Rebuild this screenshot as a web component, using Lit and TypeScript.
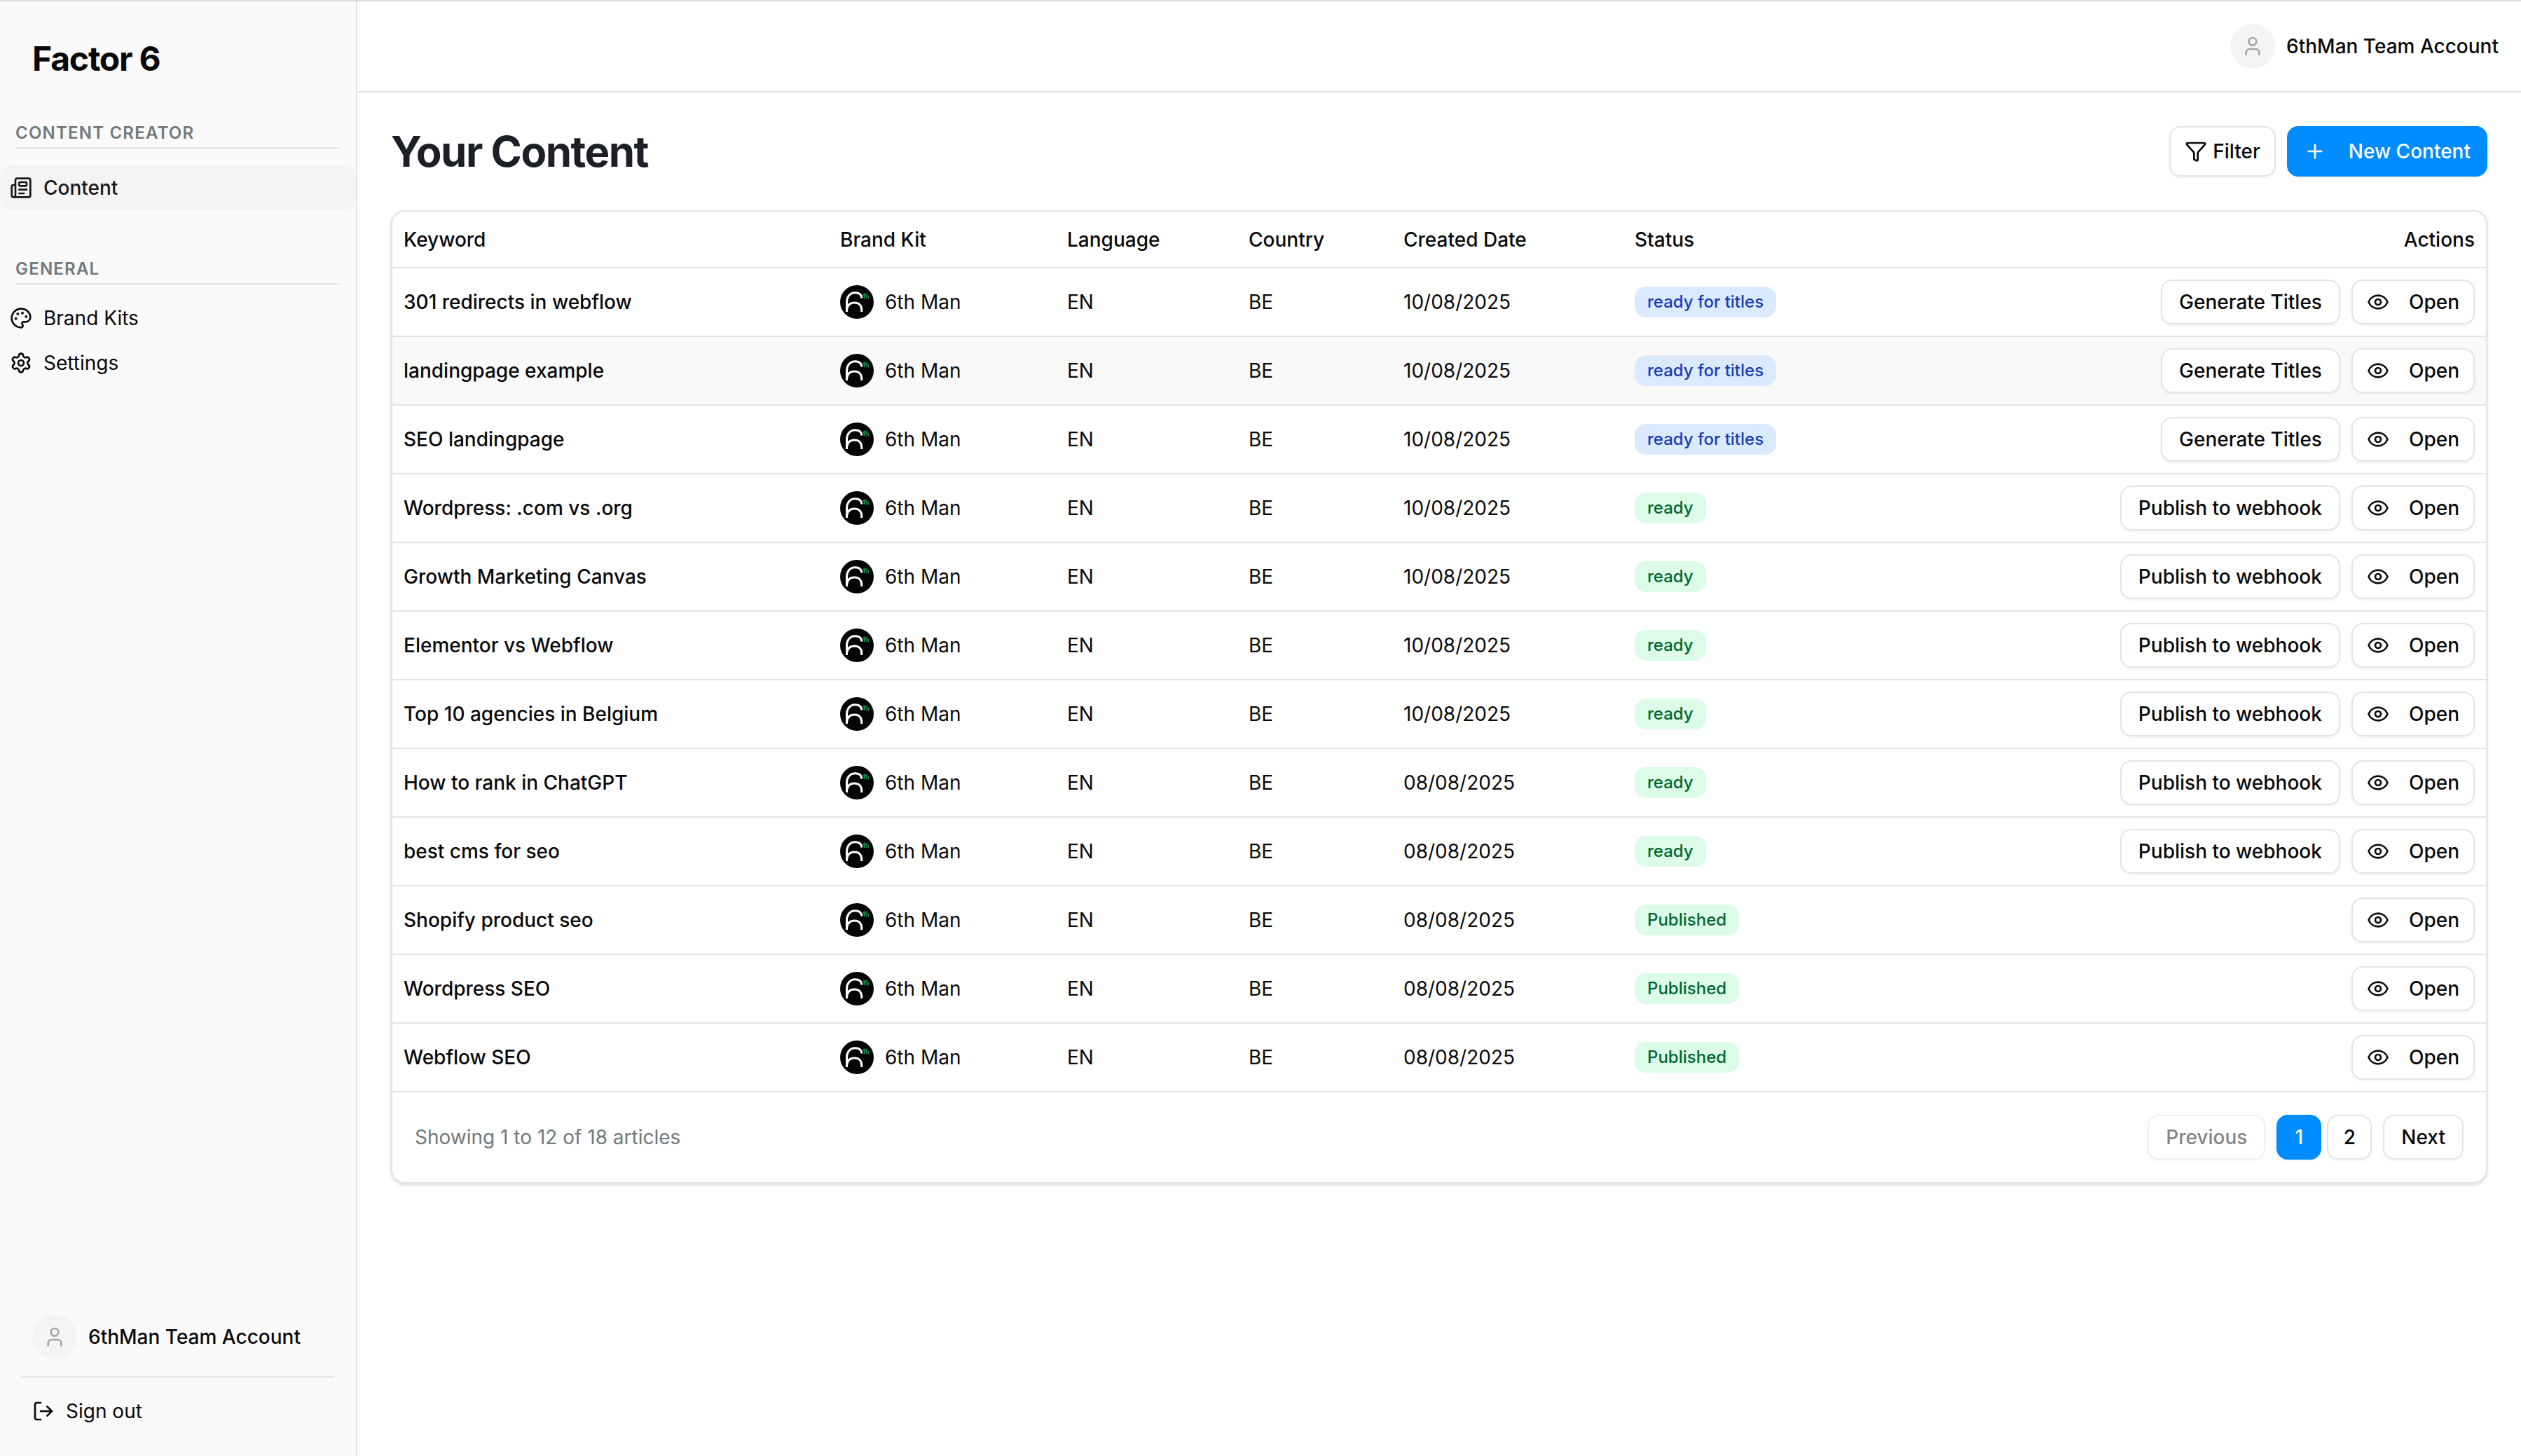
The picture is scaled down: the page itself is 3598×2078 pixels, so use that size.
import { LitElement, html, css, svg, nothing } from "lit";
import { customElement, property, state } from "lit/decorators.js";

const ICONS = {
  newspaper: svg`<path d="M15 18h-5"/><path d="M18 14h-8"/><path d="M4 22h16a2 2 0 0 0 2-2V4a2 2 0 0 0-2-2H8a2 2 0 0 0-2 2v16a2 2 0 0 1-4 0v-9a2 2 0 0 1 2-2h2"/><rect width="8" height="4" x="10" y="6" rx="1"/>`,
  palette: svg`<path d="M12 22a1 1 0 0 1 0-20 10 9 0 0 1 10 9 5 5 0 0 1-5 5h-2.25a1.75 1.75 0 0 0-1.4 2.8l.3.4a1.75 1.75 0 0 1-1.4 2.8z"/><circle cx="13.5" cy="6.5" r=".5" fill="currentColor"/><circle cx="17.5" cy="10.5" r=".5" fill="currentColor"/><circle cx="6.5" cy="12.5" r=".5" fill="currentColor"/><circle cx="8.5" cy="7.5" r=".5" fill="currentColor"/>`,
  settings: svg`<path d="M9.671 4.136a2.34 2.34 0 0 1 4.659 0 2.34 2.34 0 0 0 3.319 1.915 2.34 2.34 0 0 1 2.33 4.033 2.34 2.34 0 0 0 0 3.831 2.34 2.34 0 0 1-2.33 4.033 2.34 2.34 0 0 0-3.319 1.915 2.34 2.34 0 0 1-4.659 0 2.34 2.34 0 0 0-3.32-1.915 2.34 2.34 0 0 1-2.33-4.033 2.34 2.34 0 0 0 0-3.831A2.34 2.34 0 0 1 6.35 6.051a2.34 2.34 0 0 0 3.319-1.915"/><circle cx="12" cy="12" r="3"/>`,
  user: svg`<path d="M19 21v-2a4 4 0 0 0-4-4H9a4 4 0 0 0-4 4v2"/><circle cx="12" cy="7" r="4"/>`,
  logout: svg`<path d="m16 17 5-5-5-5"/><path d="M21 12H9"/><path d="M9 21H5a2 2 0 0 1-2-2V5a2 2 0 0 1 2-2h4"/>`,
  funnel: svg`<path d="M10 20a1 1 0 0 0 .553.895l2 1A1 1 0 0 0 14 21v-7a2 2 0 0 1 .517-1.341L21.74 4.67A1 1 0 0 0 21 3H3a1 1 0 0 0-.742 1.67l7.225 7.989A2 2 0 0 1 10 14z"/>`,
  plus: svg`<path d="M5 12h14"/><path d="M12 5v14"/>`,
  eye: svg`<path d="M2.062 12.348a1 1 0 0 1 0-.696 10.75 10.75 0 0 1 19.876 0 1 1 0 0 1 0 .696 10.75 10.75 0 0 1-19.876 0"/><circle cx="12" cy="12" r="3"/>`,
};

type IconName = keyof typeof ICONS;

const icon = (name: IconName) => html`<svg
  class="icon"
  viewBox="0 0 24 24"
  fill="none"
  stroke="currentColor"
  stroke-width="2"
  stroke-linecap="round"
  stroke-linejoin="round"
  aria-hidden="true"
>${ICONS[name]}</svg>`;

const base = css`
  * {
    box-sizing: border-box;
  }
  .icon {
    display: block;
    width: 32px;
    height: 32px;
    flex: none;
  }
  .btn {
    display: inline-flex;
    align-items: center;
    justify-content: center;
    height: 64px;
    padding: 0 24px;
    border: 2px solid #e4e4e4;
    border-radius: 16px;
    background: #fff;
    color: #09090b;
    font: inherit;
    font-weight: 500;
    white-space: nowrap;
    text-decoration: none;
    box-shadow: 0 2px 4px rgb(0 0 0 / 5%);
    cursor: pointer;
  }
  .btn:disabled {
    opacity: 0.5;
    cursor: default;
  }
  .btn.primary {
    border-color: #008cff;
    background: #008cff;
    color: #fff;
  }
`;

interface Article {
  keyword: string;
  date: string;
  status: "ready for titles" | "ready" | "Published";
}

const row = (keyword: string, date: string, status: Article["status"]): Article => ({ keyword, date, status });

const ARTICLES: Article[] = [
  row("301 redirects in webflow", "10/08/2025", "ready for titles"),
  row("landingpage example", "10/08/2025", "ready for titles"),
  row("SEO landingpage", "10/08/2025", "ready for titles"),
  row("Wordpress: .com vs .org", "10/08/2025", "ready"),
  row("Growth Marketing Canvas", "10/08/2025", "ready"),
  row("Elementor vs Webflow", "10/08/2025", "ready"),
  row("Top 10 agencies in Belgium", "10/08/2025", "ready"),
  row("How to rank in ChatGPT", "08/08/2025", "ready"),
  row("best cms for seo", "08/08/2025", "ready"),
  row("Shopify product seo", "08/08/2025", "Published"),
  row("Wordpress SEO", "08/08/2025", "Published"),
  row("Webflow SEO", "08/08/2025", "Published"),
];

const NEXT_STEP: Partial<Record<Article["status"], string>> = {
  "ready for titles": "Generate Titles",
  ready: "Publish to webhook",
};

@customElement("account-chip")
export class AccountChip extends LitElement {
  @property() name = "";

  static styles = [
    base,
    css`
      :host {
        display: flex;
        align-items: center;
        gap: 16px;
        font-weight: 500;
        white-space: nowrap;
      }
      .avatar {
        display: grid;
        place-items: center;
        width: 64px;
        height: 64px;
        border-radius: 50%;
        background: #f4f4f4;
        color: #a3a6a6;
      }
    `,
  ];

  render() {
    return html`<span class="avatar">${icon("user")}</span><span>${this.name}</span>`;
  }
}

@customElement("app-sidebar")
export class AppSidebar extends LitElement {
  static styles = [
    base,
    css`
      :host {
        display: flex;
        flex-direction: column;
        width: 510px;
        flex: none;
        border-right: 2px solid #e4e4e4;
        background: #fafafa;
      }
      .brand {
        margin: 0;
        padding: 50px 46px 0;
        font-size: 48px;
        line-height: 64px;
        font-weight: 700;
        letter-spacing: -0.025em;
      }
      .group {
        display: flex;
        flex-direction: column;
      }
      .group + .group {
        margin-top: 66px;
      }
      .brand + .group {
        margin-top: 56px;
      }
      .label {
        margin: 0 24px 24px 22px;
        padding-bottom: 2px;
        border-bottom: 2px solid #e4e4e4;
        color: #71797a;
        font-size: 24px;
        line-height: 36px;
        font-weight: 600;
        letter-spacing: 0.05em;
        text-transform: uppercase;
      }
      .group.general .label {
        margin-bottom: 16px;
      }
      .item {
        display: flex;
        align-items: center;
        gap: 16px;
        height: 64px;
        padding: 0 14px;
        border-radius: 16px;
        color: inherit;
        text-decoration: none;
      }
      .item.active {
        background: #f4f4f4;
        color: #18181b;
        font-weight: 500;
      }
      .foot {
        display: flex;
        flex-direction: column;
        margin-top: auto;
        padding: 0 32px 32px 30px;
      }
      .who {
        padding: 0 16px 24px;
        border-bottom: 2px solid #e4e4e4;
      }
      .signout {
        display: flex;
        align-items: center;
        gap: 16px;
        height: 64px;
        margin-top: 16px;
        padding: 0 16px;
        border: 0;
        background: none;
        color: inherit;
        font: inherit;
        cursor: pointer;
      }
    `,
  ];

  render() {
    return html`
      <h2 class="brand">Factor 6</h2>
      <nav class="group" aria-labelledby="creator">
        <h3 class="label" id="creator">Content Creator</h3>
        <a class="item active" href="#content" aria-current="page">${icon("newspaper")}Content</a>
      </nav>
      <nav class="group general" aria-labelledby="general">
        <h3 class="label" id="general">General</h3>
        <a class="item" href="#brand-kits">${icon("palette")}Brand Kits</a>
        <a class="item" href="#settings">${icon("settings")}Settings</a>
      </nav>
      <div class="foot">
        <account-chip class="who" name="6thMan Team Account"></account-chip>
        <button class="signout" type="button">${icon("logout")}Sign out</button>
      </div>
    `;
  }
}

@customElement("content-table")
export class ContentTable extends LitElement {
  @state() private page = 1;

  static styles = [
    base,
    css`
      :host {
        display: block;
        border: 2px solid #e4e4e4;
        border-radius: 20px;
        background: #fff;
        box-shadow: 0 2px 6px rgb(0 0 0 / 10%), 0 2px 4px rgb(0 0 0 / 6%);
      }
      table {
        width: 100%;
        border-collapse: collapse;
      }
      tr {
        border-bottom: 2px solid #e4e4e4;
      }
      th {
        height: 80px;
        padding: 0 16px;
        font-weight: 500;
        text-align: left;
        white-space: nowrap;
      }
      .c-keyword {
        width: 623px;
      }
      .c-kit {
        width: 324px;
      }
      .c-language {
        width: 259px;
      }
      .c-country {
        width: 221px;
      }
      .c-date {
        width: 330px;
      }
      td {
        padding: 16px;
        white-space: nowrap;
      }
      .highlight {
        background: #f9f9f9;
      }
      .keyword {
        font-weight: 500;
      }
      .kit,
      .actions {
        display: flex;
        align-items: center;
        gap: 16px;
      }
      .actions,
      .end {
        justify-content: flex-end;
        text-align: right;
      }
      .logo {
        display: block;
        width: 48px;
        height: 48px;
      }
      .badge {
        display: inline-flex;
        align-items: center;
        height: 44px;
        padding: 0 18px;
        border-radius: 16px;
        background: #dcfce7;
        color: #016630;
        font-size: 24px;
        font-weight: 500;
        vertical-align: middle;
      }
      .badge.titles {
        background: #dbeafe;
        color: #193cb8;
      }
      .open {
        gap: 28px;
        padding: 0 20px;
      }
      .footer {
        display: flex;
        align-items: center;
        justify-content: space-between;
        padding: 32px;
        color: #71797a;
      }
      .pager,
      .pages {
        display: flex;
        gap: 16px;
      }
      .pages {
        gap: 8px;
      }
      .page {
        width: 64px;
        padding: 0;
      }
    `,
  ];

  private logo() {
    return html`<svg class="logo" viewBox="0 0 48 48" aria-hidden="true">
      <circle cx="24" cy="24" r="24" fill="#050507" />
      <g fill="none" stroke="#fff" stroke-width="3">
        <path d="M9.5 38V25C9.5 16 14.5 10.800 21.500 10.800C27.500 10.800 30.500 14 31 18.500" />
        <path d="M9.500 35C10.500 28 14.500 25 20.500 25C27 25 30.700 29 30.700 35V38" />
      </g>
      <g fill="none" stroke="#12803f">
        <path d="M34.800 11.500V19M32.500 14H37" stroke-width="2.500" />
        <path d="M38 11.500V19.500M38 15.500H40.500V19.500" stroke-width="1.500" />
      </g>
    </svg>`;
  }

  private renderRow(a: Article, i: number) {
    const step = NEXT_STEP[a.status];
    return html`<tr class=${i === 1 ? "highlight" : ""}>
      <td class="keyword">${a.keyword}</td>
      <td><div class="kit">${this.logo()}<span>6th Man</span></div></td>
      <td>EN</td>
      <td>BE</td>
      <td>${a.date}</td>
      <td><span class="badge ${a.status === "ready for titles" ? "titles" : ""}">${a.status}</span></td>
      <td>
        <div class="actions">
          ${step ? html`<button class="btn" type="button">${step}</button>` : nothing}
          <a class="btn open" href="#open">${icon("eye")}Open</a>
        </div>
      </td>
    </tr>`;
  }

  private renderPage(n: number) {
    return html`<button
      class="btn page ${n === this.page ? "primary" : ""}"
      type="button"
      @click=${() => (this.page = n)}
    >${n}</button>`;
  }

  render() {
    return html`
      <table>
        <thead>
          <tr>
            <th class="c-keyword">Keyword</th>
            <th class="c-kit">Brand Kit</th>
            <th class="c-language">Language</th>
            <th class="c-country">Country</th>
            <th class="c-date">Created Date</th>
            <th>Status</th>
            <th class="end">Actions</th>
          </tr>
        </thead>
        <tbody>${ARTICLES.map((a, i) => this.renderRow(a, i))}</tbody>
      </table>
      <div class="footer">
        <span>Showing 1 to 12 of 18 articles</span>
        <div class="pager">
          <button class="btn" type="button" ?disabled=${this.page === 1} @click=${() => (this.page = 1)}>Previous</button>
          <div class="pages">${[1, 2].map((n) => this.renderPage(n))}</div>
          <button class="btn" type="button" ?disabled=${this.page === 2} @click=${() => (this.page = 2)}>Next</button>
        </div>
      </div>
    `;
  }
}

@customElement("app-root")
export class AppRoot extends LitElement {
  static styles = [
    base,
    css`
      :host {
        display: flex;
        min-height: 100vh;
        box-sizing: border-box;
        border-top: 2px solid #dadddc;
        background: #fff;
        color: #09090b;
        font-family: Inter, "Liberation Sans", sans-serif;
        font-size: 28px;
        line-height: 40px;
      }
      .main {
        flex: 1;
        min-width: 0;
      }
      .topbar {
        display: flex;
        align-items: center;
        justify-content: flex-end;
        height: 130px;
        padding: 0 32px;
        border-bottom: 2px solid #e4e4e4;
      }
      .body {
        display: flex;
        flex-direction: column;
        gap: 48px;
        padding: 48px;
      }
      .heading {
        display: flex;
        align-items: center;
        justify-content: space-between;
      }
      h1 {
        margin: 0;
        color: #1c1f26;
        font-size: 60px;
        line-height: 72px;
        font-weight: 700;
        letter-spacing: -0.025em;
      }
      .tools {
        display: flex;
        gap: 16px;
      }
      .tools .btn {
        height: 72px;
      }
      .filter {
        gap: 8px;
        padding: 0 20px;
      }
      .new {
        gap: 32px;
        padding: 0 22px;
      }
    `,
  ];

  render() {
    return html`
      <app-sidebar></app-sidebar>
      <div class="main">
        <header class="topbar"><account-chip name="6thMan Team Account"></account-chip></header>
        <main class="body">
          <div class="heading">
            <h1>Your Content</h1>
            <div class="tools">
              <button class="btn filter" type="button">${icon("funnel")}Filter</button>
              <button class="btn primary new" type="button">${icon("plus")}New Content</button>
            </div>
          </div>
          <content-table></content-table>
        </main>
      </div>
    `;
  }
}
